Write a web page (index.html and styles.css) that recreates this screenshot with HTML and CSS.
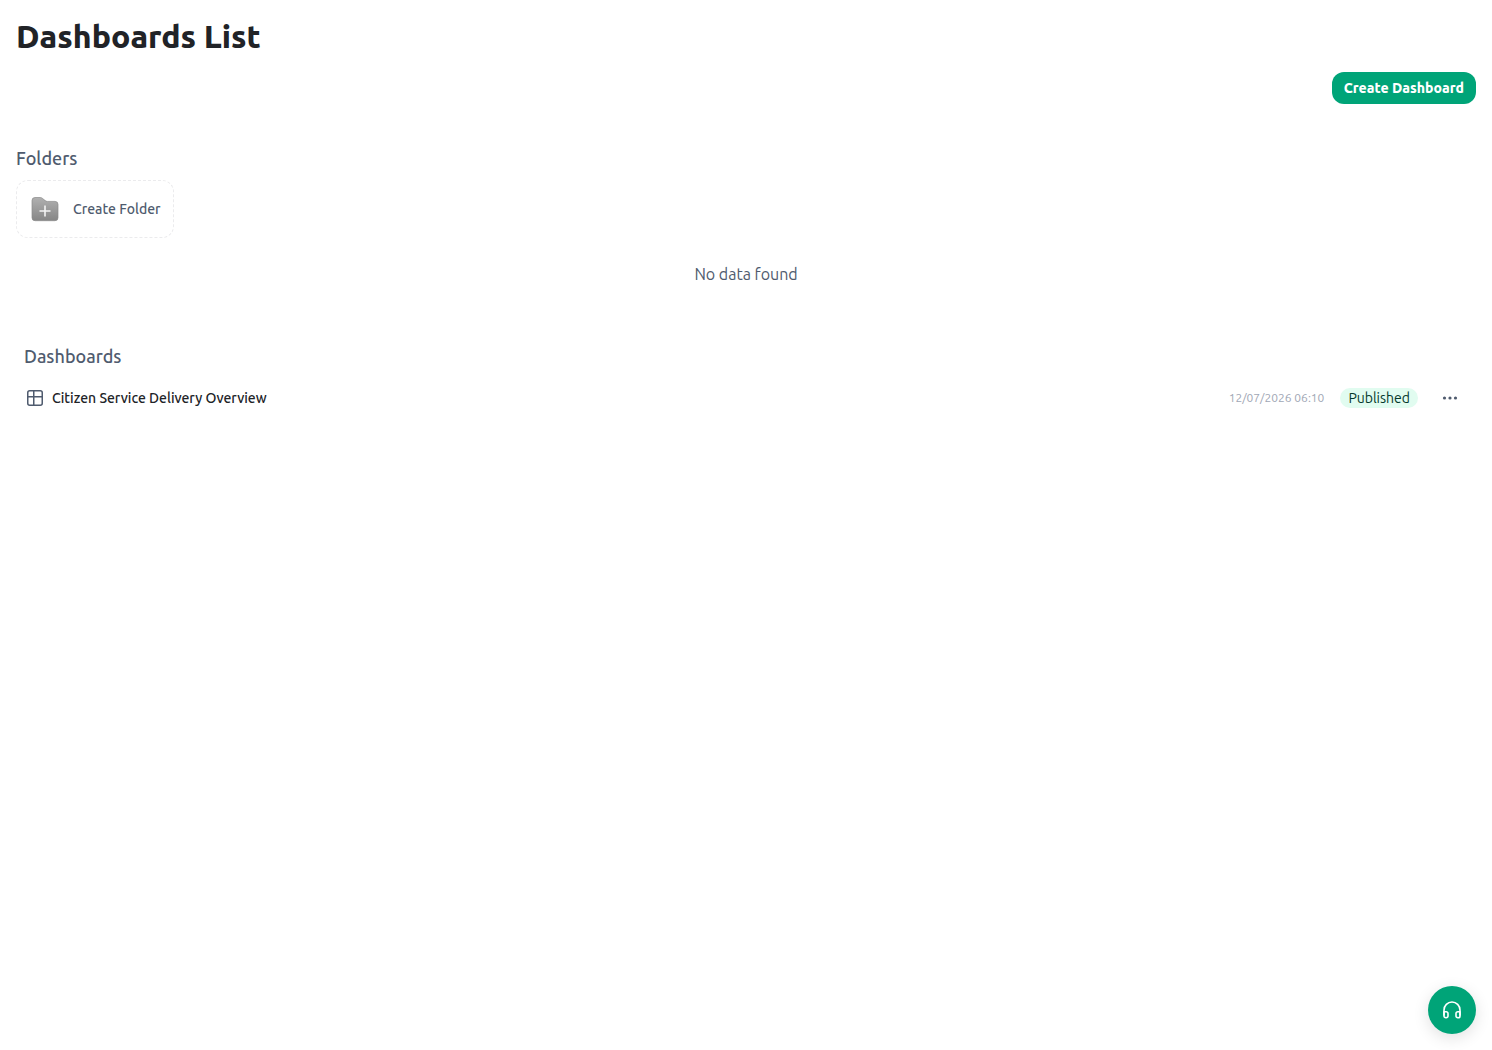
FILE: index.html
```html
<!DOCTYPE html>
<html lang="en">
<head>
    <meta charset="UTF-8">
    <meta name="viewport" content="width=device-width, initial-scale=1.0">
    <title>Dashboards List</title>
    <link rel="stylesheet" href="styles.css">
</head>
<body>
    <main class="page">
        <h1>Dashboards List</h1>
        <div class="toolbar">
            <button type="button" class="create-button">Create Dashboard</button>
        </div>

        <section class="folders">
            <h2>Folders</h2>
            <button type="button" class="create-folder">
                <svg width="32" height="32" viewBox="0 0 32 32" aria-hidden="true">
                    <defs>
                        <linearGradient id="folderFill" x1="0" y1="0" x2="0" y2="1">
                            <stop offset="0" stop-color="#b0b0b0"/>
                            <stop offset="1" stop-color="#868686"/>
                        </linearGradient>
                    </defs>
                    <path d="M3 7.5a3 3 0 0 1 3-3h5.3a3 3 0 0 1 1.9.7l3 2.4a4 4 0 0 0 2.4.8h7.4a3 3 0 0 1 3 3v13.3a3 3 0 0 1-3 3H6a3 3 0 0 1-3-3z" fill="url(#folderFill)" stroke="#8a8a8a" stroke-width=".7"/>
                    <path d="M16 12.5v11M10.5 18h11" stroke="#f4f4f4" stroke-width="1.6" fill="none"/>
                </svg>
                <span>Create Folder</span>
            </button>
            <p class="empty">No data found</p>
        </section>

        <section class="dashboards">
            <h2>Dashboards</h2>
            <div class="dashboard-row">
                <svg class="table-icon" width="20" height="20" viewBox="0 0 20 20" fill="none" stroke="#4f5b6e" stroke-width="1.5" aria-hidden="true">
                    <rect x="2.75" y="2.75" width="14.5" height="14.5" rx="2"/>
                    <path d="M2.75 8.75h14.5M8.75 2.75v14.5"/>
                </svg>
                <a href="#" class="dashboard-name">Citizen Service Delivery Overview</a>
                <time class="date" datetime="2026-07-12T06:10">12/07/2026 06:10</time>
                <span class="status">Published</span>
                <button type="button" class="more" aria-label="More actions">
                    <svg width="20" height="20" viewBox="0 0 20 20" fill="#4f5b6e" aria-hidden="true">
                        <circle cx="4.5" cy="10" r="1.6"/>
                        <circle cx="10" cy="10" r="1.6"/>
                        <circle cx="15.5" cy="10" r="1.6"/>
                    </svg>
                </button>
            </div>
        </section>
    </main>

    <button type="button" class="support" aria-label="Support">
        <svg width="20" height="20" viewBox="0 0 20 20" fill="none" stroke="#fff" stroke-width="1.6" stroke-linejoin="round" aria-hidden="true">
            <path d="M2 15.5V10a8 8 0 0 1 16 0v5.5"/>
            <path d="M2 11.7h2.2a1.8 1.8 0 0 1 1.8 1.8v2.4a1.8 1.8 0 0 1-1.8 1.8h-.4A1.8 1.8 0 0 1 2 15.9z"/>
            <path d="M18 11.7h-2.2a1.8 1.8 0 0 0-1.8 1.8v2.4a1.8 1.8 0 0 0 1.8 1.8h.4a1.8 1.8 0 0 0 1.8-1.8z"/>
        </svg>
    </button>
</body>
</html>
```
FILE: styles.css
```css
* {
    box-sizing: border-box;
}
body {
    font-family: Ubuntu, "Noto Sans", sans-serif;
    font-size: 14px;
    line-height: 20px;
    margin: 0;
    background: #fff;
    color: #212327;
}
button {
    font: inherit;
    border: none;
    cursor: pointer;
}
.page {
    padding: 16px;
}
h1 {
    margin: 0;
    font-size: 32px;
    line-height: 40px;
    font-weight: 800;
}
h2 {
    margin: 0;
    font-size: 18px;
    line-height: 28px;
    font-weight: 500;
    color: #4f5b6e;
}
.toolbar {
    display: flex;
    justify-content: flex-end;
    margin-top: 16px;
}
.create-button {
    padding: 6px 12px;
    background: #00a478;
    color: #fff;
    font-weight: 800;
    border-radius: 12px;
}
.folders {
    margin-top: 40px;
}
.create-folder {
    display: flex;
    align-items: center;
    gap: 12px;
    margin-top: 8px;
    padding: 12px;
    background: #fff;
    color: #4f5b6e;
    font-weight: 500;
    border: 1px dashed #ebebed;
    border-radius: 12px;
}
.empty {
    margin: 24px 0 0;
    font-size: 16px;
    line-height: 24px;
    text-align: center;
    color: #4f5b6e;
}
.dashboards {
    margin-top: 56px;
    padding: 0 8px;
}
.dashboard-row {
    display: flex;
    align-items: center;
    margin-top: 8px;
    padding: 4px 0;
}
.table-icon {
    margin-left: 1px;
}
.dashboard-name {
    flex: 1;
    margin-left: 7px;
    color: #212327;
    font-weight: 500;
    text-decoration: none;
}
.date {
    font-size: 12px;
    color: #9fa7b5;
}
.status {
    margin-left: 16px;
    padding: 0 8px;
    background: #e1fcf0;
    color: #03382b;
    border-radius: 10px;
}
.more {
    display: flex;
    margin: 0 2px 0 16px;
    padding: 6px;
    background: none;
}
.support {
    position: fixed;
    right: 16px;
    bottom: 16px;
    display: flex;
    align-items: center;
    justify-content: center;
    width: 48px;
    height: 48px;
    padding: 0;
    background: #00a478;
    border-radius: 50%;
    box-shadow: 0 4px 16px rgba(0, 0, 0, 0.12);
}
```
